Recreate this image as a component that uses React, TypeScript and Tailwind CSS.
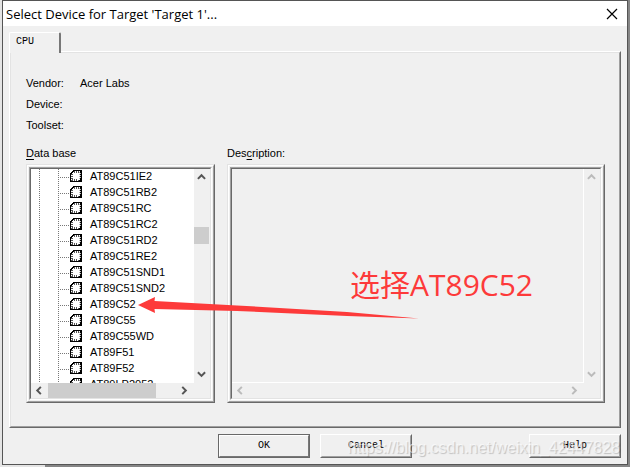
import type { ReactNode } from "react";

const devices = [
  "AT89C51IE2",
  "AT89C51RB2",
  "AT89C51RC",
  "AT89C51RC2",
  "AT89C51RD2",
  "AT89C51RE2",
  "AT89C51SND1",
  "AT89C51SND2",
  "AT89C52",
  "AT89C55",
  "AT89C55WD",
  "AT89F51",
  "AT89F52",
  "AT89LP2052",
];

const raised = "border border-t-white border-l-white border-r-[#696969] border-b-[#696969]";

function TreeGutter() {
  return (
    <svg width="52" height="16" viewBox="0 0 52 16" className="shrink-0" shapeRendering="crispEdges" aria-hidden="true">
      <path d="M8.5 0V16M27.5 0V16M29 8.5H39" stroke="#777" strokeDasharray="1 1" fill="none" />
      <path d="M42 1h9v12H39V4h1V3h1V2h1z" fill="#000" />
      <path d="M43 2h6v9h-1v1h-8V5h1V4h1V3h1z" fill="#fff" />
      <path d="M43 2.5h6M43 3.5h6" stroke="#555" strokeDasharray="1 1" />
      <path d="M40.5 5v7M41.5 5v7" stroke="#555" strokeDasharray="1 1" />
      <path d="M48.5 3v7M49.5 4v6" stroke="#bbb" strokeDasharray="1 1" />
      <path d="M41 10.5h6M41 11.5h7" stroke="#555" strokeDasharray="1 1" />
    </svg>
  );
}

const arrows = {
  up: "M1 6.5L5 2.5L9 6.5",
  down: "M1 2.5L5 6.5L9 2.5",
  left: "M6.5 1L2.5 5L6.5 9",
  right: "M2.5 1L6.5 5L2.5 9",
};

function ScrollButton({ dir, disabled = false }: { dir: keyof typeof arrows; disabled?: boolean }) {
  return (
    <button
      type="button"
      aria-label={"Scroll " + dir}
      disabled={disabled}
      className="flex h-[17px] w-[15px] shrink-0 items-center justify-center text-[#555] disabled:text-[#bbb]"
    >
      <svg width="9" height="9" viewBox="0 0 10 10" fill="none" stroke="currentColor" strokeWidth="2.2">
        <path d={arrows[dir]} />
      </svg>
    </button>
  );
}

function Frame({ children }: { children: ReactNode }) {
  return (
    <div className="h-[239px] border border-t-[#e3e3e3] border-r-[#696969] border-b-[#696969] border-l-[#e3e3e3]">
      <div className="h-full border border-t-white border-r-[#a0a0a0] border-b-[#a0a0a0] border-l-white p-px">
        <div className="h-full border border-t-[#a0a0a0] border-r-white border-b-white border-l-[#a0a0a0]">
          <div className="flex h-full flex-col border border-t-[#696969] border-r-[#e3e3e3] border-b-[#e3e3e3] border-l-[#696969]">
            {children}
          </div>
        </div>
      </div>
    </div>
  );
}

export default function App() {
  return (
    <div className="flex min-h-screen items-start bg-[linear-gradient(90deg,#e4e4e4_45px,#868686_45px)] px-0.5 font-['Liberation_Sans',Arial,sans-serif] text-[11px] leading-4 text-black">
      <main className="relative min-w-0 flex-1 border border-[#555] bg-[#f0f0f0]">
        <header className="flex h-[25px] items-center justify-between bg-white pr-[9px] pl-[3px]">
          <h1 className="font-['Open_Sans','Noto_Sans',sans-serif] text-[13px]">Select Device for Target 'Target 1'...</h1>
          <button type="button" aria-label="Close" className="flex size-3 items-center justify-center">
            <svg width="12" height="12" viewBox="0 0 12 12" stroke="#000" strokeWidth="1.2">
              <path d="M1 1L11 11M11 1L1 11" />
            </svg>
          </button>
        </header>

        <div className="px-1.5 py-1.5">
          <div role="tablist">
            <button
              type="button"
              role="tab"
              aria-selected="true"
              className="relative z-10 -mb-0.5 block h-[21px] w-[52px] rounded-t-xs border-t border-r-2 border-l border-t-white border-r-[#777] border-l-white bg-[#f0f0f0] pb-0.5 pl-1.5 text-left font-['Liberation_Mono',monospace] text-[10px]"
            >
              CPU
            </button>
          </div>

          <section className="border border-t-white border-r-[#696969] border-b-[#696969] border-l-white">
            <div className="border border-t-[#e3e3e3] border-r-[#a0a0a0] border-b-[#a0a0a0] border-l-[#e3e3e3] pt-[19px] pr-[14px] pb-[23px] pl-[15px]">
              <dl className="grid grid-cols-[54px_1fr] auto-rows-[21px] items-center">
                <dt>Vendor:</dt>
                <dd>Acer Labs</dd>
                <dt>Device:</dt>
                <dd />
                <dt>Toolset:</dt>
                <dd />
              </dl>

              <div className="relative mt-2.5 flex gap-3">
                <div className="w-[189px] shrink-0">
                  <h2 id="database" className="mb-[3px]">
                    <u className="underline-offset-2">D</u>ata base
                  </h2>
                  <Frame>
                    <div className="flex min-h-0 flex-1">
                      <ul aria-labelledby="database" className="min-w-0 flex-1 overflow-hidden bg-white">
                        {devices.map((name) => (
                          <li key={name} className="flex h-4 items-start gap-[7px] leading-[14px]">
                            <TreeGutter />
                            <span>{name}</span>
                          </li>
                        ))}
                      </ul>
                      <div className="flex w-4 flex-col pr-px">
                        <ScrollButton dir="up" />
                        <div className="flex-1 pt-[41px]">
                          <div className="h-[17px] bg-[#cdcdcd]" />
                        </div>
                        <ScrollButton dir="down" />
                      </div>
                    </div>
                    <div className="flex h-[15px] items-center pr-[18px] pl-px">
                      <ScrollButton dir="left" />
                      <div className="h-full flex-1 pl-px">
                        <div className="h-full w-[108px] bg-[#cdcdcd]" />
                      </div>
                      <ScrollButton dir="right" />
                    </div>
                  </Frame>
                </div>

                <div className="min-w-0 flex-1">
                  <label htmlFor="description" className="mb-[3px] block">
                    Des<u className="underline-offset-2">c</u>ription:
                  </label>
                  <Frame>
                    <div className="flex min-h-0 flex-1">
                      <textarea
                        id="description"
                        readOnly
                        className="min-w-0 flex-1 resize-none overflow-hidden border-r border-b border-white bg-[#f0f0f0] outline-none"
                      />
                      <div className="flex w-4 flex-col justify-between">
                        <ScrollButton dir="up" disabled />
                        <ScrollButton dir="down" disabled />
                      </div>
                    </div>
                    <div className="flex h-[15px] items-center justify-between pr-[18px] pl-px">
                      <ScrollButton dir="left" disabled />
                      <ScrollButton dir="right" disabled />
                    </div>
                  </Frame>
                </div>

                <svg className="absolute top-[151px] left-[111px]" width="284" height="24" viewBox="0 0 284 24" aria-hidden="true">
                  <path d="M1 9L18 1L17.5 5L100 9.5L210 16L282 22.5L210 20L100 15L17.5 13L18 17Z" fill="#fd3a3a" />
                </svg>
                <p className="absolute top-[120px] left-[324px] font-['Open_Sans','Noto_Sans_CJK_SC',sans-serif] text-[30px] leading-10 whitespace-nowrap text-[#fd3a3a]">
                  选择AT89C52
                </p>
              </div>
            </div>
          </section>

          <div className="mt-1.5 flex justify-end gap-2.5 font-['Liberation_Mono',monospace] text-[10px]">
            <button type="button" className="h-6 w-[92px] border border-[#696969]">
              <span className="flex h-full items-center justify-center border border-t-white border-r-[#777] border-b-[#777] border-l-white">
                OK
              </span>
            </button>
            <button type="button" className={"h-6 w-[92px] " + raised}>
              <span className="flex h-full items-center justify-center border border-transparent border-r-[#a0a0a0] border-b-[#a0a0a0]">
                Cancel
              </span>
            </button>
            <button type="button" className={"ml-[107px] h-6 w-[92px] " + raised}>
              <span className="flex h-full items-center justify-center border border-transparent border-r-[#a0a0a0] border-b-[#a0a0a0]">
                Help
              </span>
            </button>
          </div>
        </div>

        <p className="pointer-events-none absolute right-[7px] bottom-1 text-[16px] leading-6 whitespace-nowrap text-white/60 [text-shadow:1px_1px_1px_rgba(0,0,0,0.2)]">
          https://blog.csdn.net/weixin_42447828
        </p>
      </main>
    </div>
  );
}
